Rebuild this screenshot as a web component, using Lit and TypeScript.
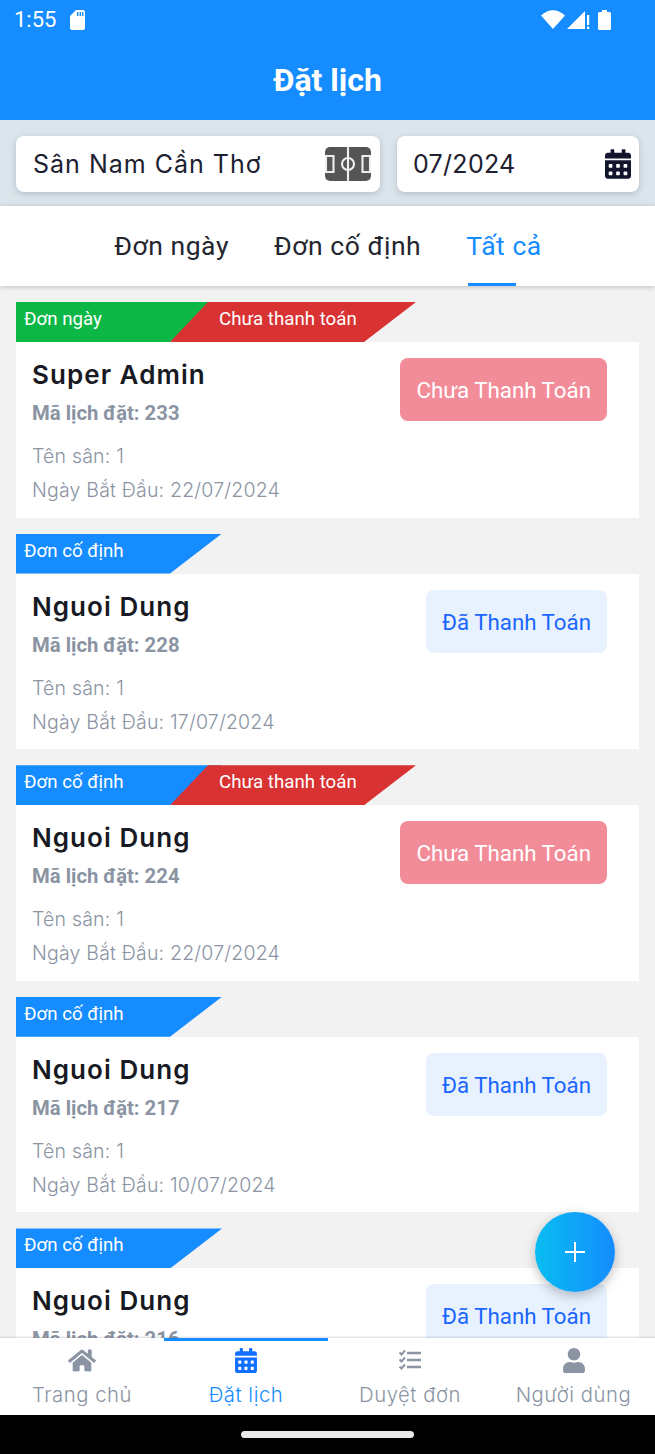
import { LitElement, html, css, svg } from 'lit';
import { customElement } from 'lit/decorators.js';
import { classMap } from 'lit/directives/class-map.js';

const CAL =
  'M0 464c0 26.5 21.5 48 48 48h352c26.5 0 48-21.5 48-48V192H0v272zm320-196c0-6.6 5.4-12 12-12h40c6.6 0 12 5.4 12 12v40c0 6.6-5.4 12-12 12h-40c-6.6 0-12-5.4-12-12v-40zm0 128c0-6.6 5.4-12 12-12h40c6.6 0 12 5.4 12 12v40c0 6.6-5.4 12-12 12h-40c-6.6 0-12-5.4-12-12v-40zM192 268c0-6.6 5.4-12 12-12h40c6.6 0 12 5.4 12 12v40c0 6.6-5.4 12-12 12h-40c-6.6 0-12-5.4-12-12v-40zm0 128c0-6.6 5.4-12 12-12h40c6.6 0 12 5.4 12 12v40c0 6.6-5.4 12-12 12h-40c-6.6 0-12-5.4-12-12v-40zM64 268c0-6.6 5.4-12 12-12h40c6.6 0 12 5.4 12 12v40c0 6.6-5.4 12-12 12H76c-6.6 0-12-5.4-12-12v-40zm0 128c0-6.6 5.4-12 12-12h40c6.6 0 12 5.4 12 12v40c0 6.6-5.4 12-12 12H76c-6.6 0-12-5.4-12-12v-40zM400 64h-48V16c0-8.8-7.2-16-16-16h-32c-8.8 0-16 7.2-16 16v48H160V16c0-8.8-7.2-16-16-16h-32c-8.8 0-16 7.2-16 16v48H48C21.5 64 0 85.5 0 112v48h448v-48c0-26.5-21.5-48-48-48z';
const HOME =
  'M280.37 148.26L96 300.11V464a16 16 0 0 0 16 16l112.06-.29a16 16 0 0 0 15.92-16V368a16 16 0 0 1 16-16h64a16 16 0 0 1 16 16v95.64a16 16 0 0 0 16 16.05L464 480a16 16 0 0 0 16-16V300L295.67 148.26a12.19 12.19 0 0 0-15.3 0zM571.6 251.47L488 182.56V44.05a12 12 0 0 0-12-12h-56a12 12 0 0 0-12 12v72.61L318.47 43a48 48 0 0 0-61 0L4.34 251.47a12 12 0 0 0-1.6 16.9l25.5 31A12 12 0 0 0 45.15 301l235.22-193.74a12.19 12.19 0 0 1 15.3 0L530.9 301a12 12 0 0 0 16.9-1.6l25.5-31a12 12 0 0 0-1.7-16.93z';
const USER =
  'M224 256c70.7 0 128-57.3 128-128S294.7 0 224 0 96 57.3 96 128s57.3 128 128 128zm89.6 32h-16.7c-22.2 10.2-46.9 16-72.9 16s-50.6-5.8-72.9-16h-16.7C60.2 288 0 348.2 0 422.4V464c0 26.5 21.5 48 48 48h352c26.5 0 48-21.5 48-48v-41.6c0-74.2-60.2-134.4-134.4-134.4z';

const calIcon = (cls: string) => html`<svg class=${cls} viewBox="0 0 448 512"><path fill="currentColor" d=${CAL} /></svg>`;

const tasksIcon = svg`<svg class="nav-icon" viewBox="0 0 28 25" fill="none" stroke="currentColor">
  <path stroke-width="1.9" d="M3.500 4.500l2 2 3.500-4M3.500 11.500l2 2 3.500-4M3.500 18.500l2 2 3.500-4" />
  <path stroke-width="2.400" d="M11 5h14M11 12h14M11 19h14" />
</svg>`;

const fieldIcon = html`<svg class="field" viewBox="0 0 46 34">
  <rect width="46" height="34" rx="5" fill="#555" />
  <g fill="none" stroke="#eee" stroke-width="2.100">
    <path d="M23 0v34" />
    <circle cx="23" cy="17" r="6" />
    <path d="M1 9h7.500v16H1z" />
    <path d="M45 9h-7.500v16H45z" />
  </g>
</svg>`;

interface Booking {
  kind: 'day' | 'fixed';
  name: string;
  code: number;
  start: string;
  paid: boolean;
}

const BOOKINGS: Booking[] = [
  { kind: 'day', name: 'Super Admin', code: 233, start: '22/07/2024', paid: false },
  { kind: 'fixed', name: 'Nguoi Dung', code: 228, start: '17/07/2024', paid: true },
  { kind: 'fixed', name: 'Nguoi Dung', code: 224, start: '22/07/2024', paid: false },
  { kind: 'fixed', name: 'Nguoi Dung', code: 217, start: '10/07/2024', paid: true },
  { kind: 'fixed', name: 'Nguoi Dung', code: 216, start: '10/07/2024', paid: true },
];

@customElement('app-root')
export class AppRoot extends LitElement {
  static styles = css`
    :host {
      display: flex;
      flex-direction: column;
      position: relative;
      width: 655px;
      height: 1454px;
      overflow: hidden;
      background: #f2f2f2;
      font-family: 'Inter', 'Liberation Sans', sans-serif;
      color: #12152b;
    }
    .top {
      height: 120px;
      flex: none;
      background: #158cff;
      color: #fff;
      position: relative;
      z-index: 2;
    }
    .status {
      height: 39px;
      padding: 0 14px;
      display: flex;
      align-items: center;
      font: 400 22px 'Roboto', sans-serif;
    }
    .status .sd {
      width: 17px;
      height: 20px;
      margin-left: 13px;
    }
    .status .right {
      margin-left: auto;
      display: flex;
      align-items: center;
      margin-right: 30px;
      gap: 2px;
    }
    .status .batt {
      margin-left: 6px;
    }
    .title {
      text-align: center;
      font: 700 32px/36px 'Roboto', sans-serif;
      margin-top: 23px;
    }
    .filters {
      height: 86px;
      flex: none;
      box-sizing: border-box;
      padding: 16px;
      display: flex;
      gap: 17px;
      background: #dbe5eb;
    }
    .box {
      height: 56px;
      box-sizing: border-box;
      background: #fff;
      border-radius: 8px;
      box-shadow: 0 2px 6px rgba(60, 80, 100, 0.25);
      display: flex;
      align-items: center;
      padding: 0 0 0 17px;
      font-size: 25px;
      font-weight: 400;
      color: #1c2030;
    }
    .box.court {
      width: 364px;
      letter-spacing: 1px;
    }
    .box.date {
      width: 242px;
      padding-left: 16px;
      letter-spacing: 0.3px;
    }
    .box span {
      flex: 1;
    }
    .field {
      width: 46px;
      height: 34px;
      margin-right: 9px;
    }
    .cal {
      width: 26px;
      height: 30px;
      color: #12152b;
      margin-right: 8px;
    }
    .tabs {
      height: 80px;
      flex: none;
      background: #fff;
      display: flex;
      justify-content: center;
      gap: 45px;
      padding-left: 1px;
      font: 400 26.5px 'Roboto', sans-serif;
      letter-spacing: 0.55px;
      box-shadow: 0 1px 5px rgba(0, 0, 0, 0.22);
      position: relative;
      z-index: 1;
    }
    .tab {
      position: relative;
      line-height: 80px;
      color: #23262f;
    }
    .tab.on {
      color: #158cff;
    }
    .tab.on::after {
      content: '';
      position: absolute;
      left: 2px;
      right: 26px;
      bottom: 0;
      height: 3px;
      background: #158cff;
    }
    .list {
      flex: 1;
      min-height: 0;
      overflow: hidden;
      padding: 16px 16px 0;
      display: flex;
      flex-direction: column;
      gap: 16px;
    }
    .item {
      flex: none;
    }
    .tags {
      display: flex;
      height: 40px;
      color: #fff;
      font: 400 18.7px/34px 'Roboto', sans-serif;
    }
    .tag {
      width: 206px;
      padding-left: 8px;
      box-sizing: border-box;
      clip-path: polygon(0 0, 100% 0, 154px 100%, 0 100%);
    }
    .tag.day {
      background: #0db746;
    }
    .tag.fixed {
      background: #158cff;
    }
    .tag.unpaid {
      width: 246px;
      margin-left: -52px;
      padding-left: 49px;
      background: #d93232;
      clip-path: polygon(38px 0, 100% 0, 194px 100%, 0 100%);
    }
    .card {
      height: 175.6px;
      box-sizing: border-box;
      background: #fff;
      padding: 16px 32px 0 16px;
      display: flex;
      justify-content: space-between;
      align-items: flex-start;
    }
    .name {
      font-size: 26px;
      line-height: 32px;
      font-weight: 600;
      letter-spacing: 1.05px;
      color: #171a22;
      margin-top: 1px;
    }
    .code {
      font: 700 20.3px/30px 'Roboto', sans-serif;
      color: #8a94a3;
      margin-top: 7px;
    }
    .meta {
      font-size: 19.5px;
      line-height: 34px;
      font-weight: 300;
      letter-spacing: 0.2px;
      color: #8a94a3;
    }
    .meta.first {
      margin-top: 11px;
    }
    .badge {
      height: 63px;
      box-sizing: border-box;
      padding: 0 16px;
      border-radius: 8px;
      font: 400 22.3px/65px 'Roboto', sans-serif;
    }
    .badge.unpaid {
      background: #f38c99;
      color: #fff;
    }
    .badge.paid {
      background: #e8f2ff;
      color: #1a66ff;
    }
    .fab {
      position: absolute;
      left: 535px;
      top: 1212px;
      width: 80px;
      height: 80px;
      border-radius: 50%;
      background: linear-gradient(90deg, #08bdf2, #158cff);
      box-shadow: 0 4px 12px rgba(0, 0, 0, 0.25);
      display: flex;
      align-items: center;
      justify-content: center;
      z-index: 3;
    }
    .fab svg {
      width: 22px;
      height: 22px;
    }
    .nav {
      position: relative;
      z-index: 2;
      flex: none;
      height: 77px;
      background: #fff;
      box-shadow: 0 -1px 2px rgba(0, 0, 0, 0.15);
      display: grid;
      grid-template-columns: 164px 164px 164px 163px;
    }
    .nav-item {
      display: flex;
      flex-direction: column;
      align-items: center;
      color: #8a94a3;
      font-size: 20.3px;
      font-weight: 300;
      letter-spacing: 0.55px;
      line-height: 26px;
      padding-top: 10px;
      box-sizing: border-box;
      gap: 9px;
    }
    .nav-item.on {
      color: #158cff;
      box-shadow: inset 0 3px 0 #158cff;
    }
    .nav-icon {
      height: 25px;
      width: 28px;
      display: block;
    }
    .nav-item.on .nav-icon {
      color: #0f6fff;
    }
    .home-bar {
      flex: none;
      height: 39px;
      background: #000;
      display: flex;
      align-items: center;
      justify-content: center;
    }
    .home-bar i {
      display: block;
      width: 173px;
      height: 7px;
      border-radius: 4px;
      background: #e8e8e8;
    }
  `;

  private renderItem(b: Booking) {
    return html`<div class="item">
      <div class="tags">
        <div class=${classMap({ tag: true, [b.kind]: true })}>${b.kind === 'day' ? 'Đơn ngày' : 'Đơn cố định'}</div>
        ${b.paid ? '' : html`<div class="tag unpaid">Chưa thanh toán</div>`}
      </div>
      <div class="card">
        <div>
          <div class="name">${b.name}</div>
          <div class="code">Mã lịch đặt: ${b.code}</div>
          <div class="meta first">Tên sân: 1</div>
          <div class="meta">Ngày Bắt Đầu: ${b.start}</div>
        </div>
        <div class=${classMap({ badge: true, paid: b.paid, unpaid: !b.paid })}>${b.paid ? 'Đã Thanh Toán' : 'Chưa Thanh Toán'}</div>
      </div>
    </div>`;
  }

  render() {
    return html`
      <div class="top">
        <div class="status">
          <span>1:55</span>
          <svg class="sd" viewBox="0 0 15 20"><path fill="#fff" fill-rule="evenodd" d="M6 0h7a2 2 0 0 1 2 2v16a2 2 0 0 1-2 2H2a2 2 0 0 1-2-2V6zM7 2v4h1.400V2zM9.600 2v4H11V2zM12 2v4h1.400V2z" /></svg>
          <div class="right">
            <svg width="24" height="19" viewBox="0 0 24 19"><path fill="#fff" d="M0 5.500Q12-5 24 5.500L12 19z" /></svg>
            <svg width="23" height="20" viewBox="0 0 23 20"><path fill="#fff" d="M0 19L18 1v18zM20 5h2.200v10H20zM20 16.500h2.200V19H20z" /></svg>
            <svg class="batt" width="13" height="20" viewBox="0 0 13 20"><path fill="#fff" d="M4 0h5v2h2.500A1.500 1.500 0 0 1 13 3.500v15a1.500 1.500 0 0 1-1.500 1.500h-10A1.500 1.500 0 0 1 0 18.500v-15A1.500 1.500 0 0 1 1.500 2H4z" /></svg>
          </div>
        </div>
        <div class="title">Đặt lịch</div>
      </div>
      <div class="filters">
        <div class="box court"><span>Sân Nam Cần Thơ</span>${fieldIcon}</div>
        <div class="box date"><span>07/2024</span>${calIcon('cal')}</div>
      </div>
      <div class="tabs">
        <div class="tab">Đơn ngày</div>
        <div class="tab">Đơn cố định</div>
        <div class="tab on">Tất cả</div>
      </div>
      <div class="list">${BOOKINGS.map(b => this.renderItem(b))}</div>
      <div class="fab">
        <svg viewBox="0 0 22 22"><path stroke="#fff" stroke-width="2" d="M11 1v20M1 11h20" /></svg>
      </div>
      <div class="nav">
        <div class="nav-item">
          <svg class="nav-icon" viewBox="0 0 576 512"><path fill="currentColor" d=${HOME} /></svg>
          Trang chủ
        </div>
        <div class="nav-item on">${calIcon('nav-icon')} Đặt lịch</div>
        <div class="nav-item">${tasksIcon} Duyệt đơn</div>
        <div class="nav-item">
          <svg class="nav-icon" viewBox="0 0 448 512"><path fill="currentColor" d=${USER} /></svg>
          Người dùng
        </div>
      </div>
      <div class="home-bar"><i></i></div>
    `;
  }
}
